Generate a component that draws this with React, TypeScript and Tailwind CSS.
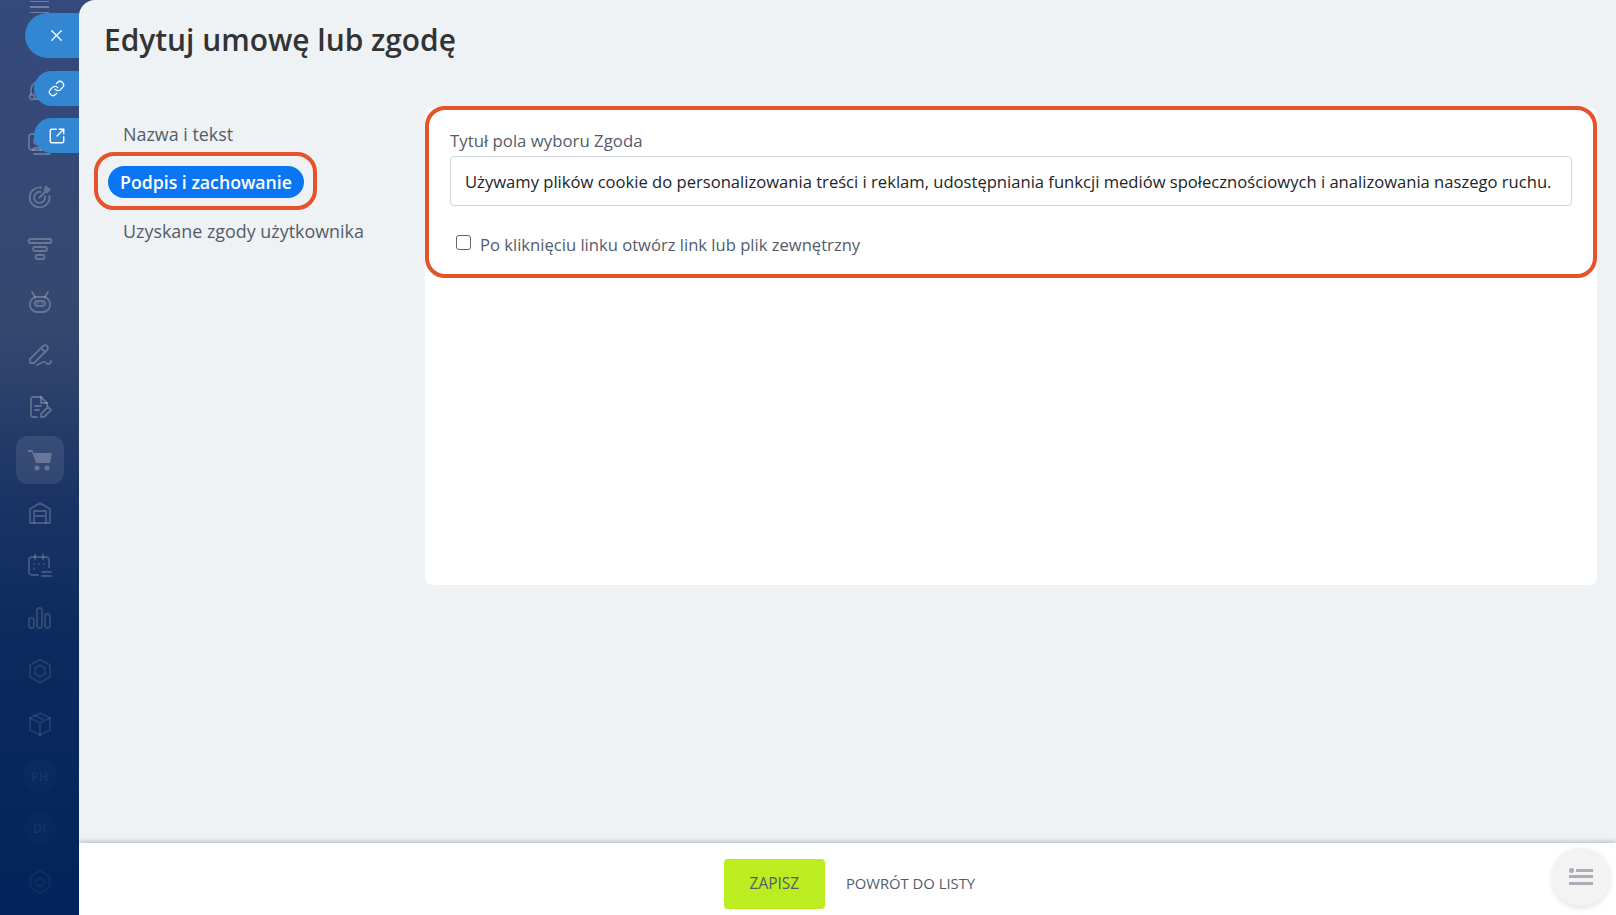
import { X, Link as LinkIcon, SquareArrowOutUpRight } from "lucide-react";
import type { ReactNode } from "react";

function Ico({ children, className = "" }: { children: ReactNode; className?: string }) {
  return (
    <svg width="26" height="26" viewBox="0 0 26 26" fill="none" stroke="currentColor" strokeWidth="1.8" strokeLinecap="round" strokeLinejoin="round" className={className}>
      {children}
    </svg>
  );
}

const sideIcons: { key: string; tone: string; node: ReactNode }[] = [
  { key: "support", tone: "text-white/25", node: <Ico><path d="M4 16v-4a9 9 0 0 1 18 0v4" /><circle cx="5" cy="19" r="2.5" /><path d="M8 21h8" /></Ico> },
  { key: "contact", tone: "text-white/25", node: <Ico><rect x="2" y="3" width="17" height="16" rx="3" /><circle cx="10" cy="10" r="3" /><path d="M6 19c0-3 8-3 8 0M7 23h16" /></Ico> },
  { key: "target", tone: "text-white/25", node: <Ico><path d="M14 3.500A10 10 0 1 0 22.500 12" /><path d="M13.500 8a5.500 5.500 0 1 0 4.500 4.500" /><path d="M12.500 13.500 20 6M18 5l1-2.500 1.500 2 2 .5L20.500 8 18 8z" /></Ico> },
  { key: "funnel", tone: "text-white/25", node: <Ico><rect x="1.500" y="3" width="23" height="4" rx="2" /><rect x="6" y="11" width="14" height="4" rx="2" /><rect x="8.500" y="19" width="9" height="4" rx="2" /></Ico> },
  { key: "bot", tone: "text-white/25", node: <Ico><path d="M5 3l3 5M21 3l-3 5" /><rect x="3" y="8" width="20" height="15" rx="7" /><rect x="8" y="12" width="10" height="5" rx="2.500" /><path d="M11 14.500h.01M15 14.500h.01" /></Ico> },
  { key: "sign", tone: "text-white/25", node: <Ico><path d="M3 21v-4L16 4a2.500 2.500 0 0 1 4 4L7 21zM14 6l4 4" /><path d="M10 23c3-1 5-4 8-3 1 .5 1 2 3 2 2 0 3-1 3-3" /></Ico> },
  { key: "doc", tone: "text-white/25", node: <Ico><path d="M10 23H6a2 2 0 0 1-2-2V5a2 2 0 0 1 2-2h8l6 6v3" /><path d="M14 3v6h6M8 12h6M8 16h4" /><path d="M14 23v-3l7-7 3 3-7 7z" /></Ico> },
  { key: "cart", tone: "text-white/25", node: (
    <svg width="26" height="26" viewBox="0 0 26 26" fill="currentColor">
      <path d="M1 3h4.500l1 3H25l-2 10H9L5 5H1z" />
      <circle cx="10" cy="21" r="2.500" />
      <circle cx="20" cy="21" r="2.500" />
    </svg>
  ) },
  { key: "warehouse", tone: "text-white/20", node: <Ico><path d="M3 23V9l10-6 10 6v14z" /><path d="M7 23V11h12v12M7 16h12" /></Ico> },
  { key: "calendar", tone: "text-white/20", node: <Ico><path d="M11 22H5a3 3 0 0 1-3-3V7a3 3 0 0 1 3-3h14a3 3 0 0 1 3 3v7" /><path d="M8 1.500v5M16 1.500v5M7 11h.01M12 11h.01M17 11h.01M7 16h.01M15 19h9M15 23h9" /></Ico> },
  { key: "chart", tone: "text-white/15", node: <Ico><rect x="2" y="13" width="5" height="10" rx="2.500" /><rect x="10" y="3" width="5" height="20" rx="2.500" /><rect x="18" y="9" width="5" height="14" rx="2.500" /></Ico> },
  { key: "hex", tone: "text-white/10", node: <Ico><path d="M13 1.500 23 7v12l-10 5.500L3 19V7z" /><path d="M13 7l5 3v6l-5 3-5-3v-6z" /></Ico> },
  { key: "box", tone: "text-white/10", node: <Ico><path d="M13 2l10 5v12l-10 5-10-5V7z" /><path d="M3 7l10 5 10-5M13 12v12M8 4.500l10 5" /></Ico> },
];

function SideBadge({ label }: { label: string }) {
  return (
    <span className="flex h-8 w-8 items-center justify-center rounded-full bg-white/[0.015] text-[13px] font-bold text-white/[0.06]">
      {label}
    </span>
  );
}

function Sidebar() {
  return (
    <aside className="relative flex w-[79px] shrink-0 flex-col items-center">
      <div className="-mt-[19px] mb-[32px] flex h-[52px] shrink-0 items-center">
        <div className="flex w-[19px] flex-col gap-[4px]">
          <span className="h-[1.5px] bg-white/30" />
          <span className="h-[1.5px] bg-white/30" />
          <span className="h-[1.5px] bg-white/30" />
        </div>
      </div>
      {sideIcons.map((item) => (
        <div key={item.key} className={`flex h-[52.7px] w-full shrink-0 items-center justify-center ${item.tone}`}>
          {item.key === "cart" ? (
            <span className="flex h-[48px] w-[48px] items-center justify-center rounded-[12px] bg-white/[0.09]">{item.node}</span>
          ) : (
            item.node
          )}
        </div>
      ))}
      <div className="flex h-[52.7px] shrink-0 items-center justify-center"><SideBadge label="PH" /></div>
      <div className="flex h-[52.7px] shrink-0 items-center justify-center"><SideBadge label="DI" /></div>
      <div className="flex h-[52.7px] shrink-0 items-center justify-center text-white/[0.05]">
        <Ico><path d="M13 2l9.500 5.500v11L13 24l-9.500-5.500v-11z" /><circle cx="13" cy="13" r="4" /></Ico>
      </div>

      <button className="absolute right-0 top-[13px] flex h-[45px] w-[54px] items-center justify-center rounded-l-[23px] bg-[#3286d2] pl-[8px] text-white">
        <X size={19} strokeWidth={1.6} />
      </button>
      <button className="absolute right-0 top-[71px] flex h-[35px] w-[45px] items-center justify-center rounded-l-[18px] bg-[#3286d2] text-white">
        <LinkIcon size={17} strokeWidth={1.8} />
      </button>
      <button className="absolute right-0 top-[118px] flex h-[35px] w-[45px] items-center justify-center rounded-l-[18px] bg-[#3286d2] text-white">
        <SquareArrowOutUpRight size={18} strokeWidth={1.8} />
      </button>
    </aside>
  );
}

function Footer() {
  return (
    <footer className="relative flex h-[72px] shrink-0 items-start justify-center bg-white pl-[4px] pt-[16px] shadow-[0_-2px_4px_rgba(0,0,0,0.18)]">
      <button className="flex h-[50px] w-[101px] items-center justify-center rounded-[4px] bg-[#bbed21] text-[15.5px] font-medium text-[#535c69]">
        ZAPISZ
      </button>
      <button className="ml-[21px] h-[48px] text-[14.8px] font-medium text-[#535c69]">POWRÓT DO LISTY</button>
      <button className="absolute right-[6px] top-[5px] flex h-[58px] w-[58px] items-center justify-center rounded-full bg-[#f3f3f4] shadow-[0_2px_6px_rgba(0,0,0,0.12)]">
        <svg width="24" height="18" viewBox="0 0 24 18" fill="#a9adb5">
          <circle cx="2.500" cy="2.500" r="2.500" />
          <rect x="7" y="1" width="17" height="3" />
          <rect x="0" y="7" width="24" height="3" />
          <rect x="0" y="14" width="24" height="3" />
        </svg>
      </button>
    </footer>
  );
}

export default function App() {
  return (
    <div className="flex h-[915px] w-full overflow-hidden bg-[linear-gradient(180deg,#344a7c_0%,#34486f_36%,#1a3365_55%,#0d2a5e_70%,#02235a_100%)] font-['Open_Sans',sans-serif]">
      <Sidebar />
      <main className="flex min-w-0 flex-1 flex-col overflow-hidden rounded-tl-[16px] bg-[#eef2f5]">
        <div className="flex-1">
          <h1 className="pl-[25px] pt-[18px] text-[29.9px] font-semibold leading-[44px] text-[#333]">Edytuj umowę lub zgodę</h1>

          <div className="mt-[46px] flex">
            <nav className="flex w-[346px] shrink-0 flex-col items-start pl-[29px] text-[17.9px] text-[#535c69]">
              <a className="mt-[10px] flex h-[32px] items-center px-[15px]">Nazwa i tekst</a>
              <div className="relative mt-[16px]">
                <a className="flex h-[32px] w-[196px] items-center justify-center rounded-full bg-[#0b76f3] text-[17.7px] font-semibold text-white">
                  Podpis i zachowanie
                </a>
                <span className="absolute -bottom-[12px] -left-[14px] -right-[13px] -top-[14px] rounded-[20px] border-4 border-[#e4532a]" />
              </div>
              <a className="mt-[17px] flex h-[32px] items-center px-[15px]">Uzyskane zgody użytkownika</a>
            </nav>

            <section className="relative h-[477px] w-[1172px] rounded-[8px] bg-white px-[25px] pt-[20px]">
              <label className="block text-[16.8px] leading-[26px] text-[#535c69]">Tytuł pola wyboru Zgoda</label>
              <input
                readOnly
                value="Używamy plików cookie do personalizowania treści i reklam, udostępniania funkcji mediów społecznościowych i analizowania naszego ruchu."
                className="mt-[2px] block h-[50px] w-full rounded-[4px] border border-[#ced4da] bg-white px-[14px] text-[16.6px] text-[#212529] outline-none"
              />
              <label className="mt-[27px] flex items-center pl-[6px] text-[16.6px] text-[#535c69]">
                <span className="h-[15px] w-[15px] shrink-0 -translate-y-[3px] rounded-[3px] border-[1.5px] border-[#5f6670] bg-white" />
                <span className="ml-[9px]">Po kliknięciu linku otwórz link lub plik zewnętrzny</span>
              </label>
              <span className="absolute -top-[2px] left-0 right-0 h-[172px] rounded-[20px] border-4 border-[#e4532a]" />
            </section>
          </div>
        </div>
        <Footer />
      </main>
    </div>
  );
}
